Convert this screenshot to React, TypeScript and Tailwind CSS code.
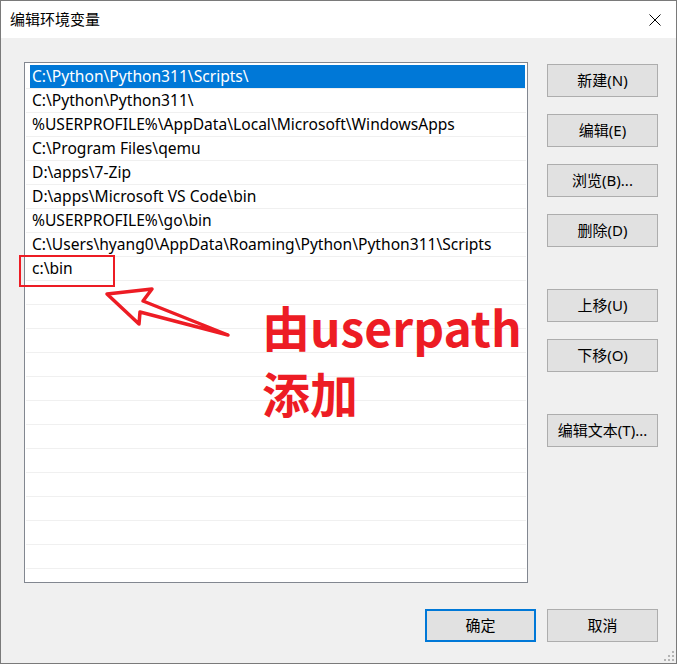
import React from 'react';

const paths = [
  'C:\\Python\\Python311\\Scripts\\',
  'C:\\Python\\Python311\\',
  '%USERPROFILE%\\AppData\\Local\\Microsoft\\WindowsApps',
  'C:\\Program Files\\qemu',
  'D:\\apps\\7-Zip',
  'D:\\apps\\Microsoft VS Code\\bin',
  '%USERPROFILE%\\go\\bin',
  'C:\\Users\\hyang0\\AppData\\Roaming\\Python\\Python311\\Scripts',
  'c:\\bin',
];

const rows = [...paths, ...Array(13).fill('')];

const uiFont = "font-['Noto_Sans','Noto_Sans_CJK_SC',sans-serif]";

const Btn: React.FC<{ label: string; primary?: boolean }> = ({ label, primary }) => (
  <button
    className={`h-[33px] w-[111px] bg-[#e1e1e1] text-[15px] text-black ${
      primary ? 'border-2 border-[#0078d7]' : 'border border-[#adadad]'
    }`}
  >
    {label}
  </button>
);

const App: React.FC = () => {
  return (
    <div className={`relative flex h-[664px] w-[677px] flex-col overflow-hidden border border-[#7a7a7a] bg-[#f0f0f0] ${uiFont}`}>
      {/* title bar */}
      <div className="flex h-[37px] shrink-0 items-center justify-between bg-white pl-[9px] pr-[15px]">
        <span className="text-[15px] text-black">编辑环境变量</span>
        <svg width="12" height="12" viewBox="0 0 12 12" className="text-black">
          <path d="M0.5 0.5 L11.5 11.5 M11.5 0.5 L0.5 11.5" stroke="currentColor" strokeWidth="1" />
        </svg>
      </div>

      {/* list + side buttons */}
      <div className="flex gap-[19px] pl-[23px] pr-[18px] pt-[24px]">
        <div className="h-[521px] w-[504px] shrink-0 overflow-hidden border border-[#828790] bg-white px-[1px] pt-[2px]">
          {rows.map((p, i) => (
            <div key={i} className="h-[24px] border-b border-[#f0f0f0] pl-[4px] pr-[1px]">
              <div
                className={`flex h-[23px] items-center whitespace-nowrap pl-[2px] text-[15.6px] leading-none ${
                  i === 0 ? 'bg-[#0078d7] text-white' : 'text-black'
                }`}
              >
                {p}
              </div>
            </div>
          ))}
        </div>

        <div className="flex flex-col pt-[2px]">
          <div className="flex flex-col gap-[17px]">
            <Btn label="新建(N)" />
            <Btn label="编辑(E)" />
            <Btn label="浏览(B)..." />
            <Btn label="删除(D)" />
          </div>
          <div className="mt-[42px] flex flex-col gap-[17px]">
            <Btn label="上移(U)" />
            <Btn label="下移(O)" />
          </div>
          <div className="mt-[42px]">
            <Btn label="编辑文本(T)..." />
          </div>
        </div>
      </div>

      {/* footer */}
      <div className="flex justify-end gap-[11px] pr-[18px] pt-[26px]">
        <Btn label="确定" primary />
        <Btn label="取消" />
      </div>

      {/* annotations */}
      <svg className="pointer-events-none absolute -left-px -top-px" width="677" height="664">
        <rect x="20" y="256" width="94" height="30" fill="none" stroke="#ed1c24" strokeWidth="2" />
        <polygon
          points="107,294 152,289 143,301 228,335 140,312 139,324"
          fill="none"
          stroke="#ed1c24"
          strokeWidth="3.5"
          strokeLinejoin="round"
        />
        {/* resize grip */}
        <g fill="#b4b4b4">
          <rect x="672" y="651" width="2" height="2" />
          <rect x="668" y="655" width="2" height="2" />
          <rect x="672" y="655" width="2" height="2" />
          <rect x="664" y="659" width="2" height="2" />
          <rect x="668" y="659" width="2" height="2" />
          <rect x="672" y="659" width="2" height="2" />
        </g>
      </svg>
      <div className="pointer-events-none absolute left-[261px] top-[292px] font-['Noto_Sans_CJK_SC',sans-serif] text-[48px] font-bold leading-[66px] text-[#ed1c24]">
        由userpath
        <br />
        添加
      </div>
    </div>
  );
};

export default App;
